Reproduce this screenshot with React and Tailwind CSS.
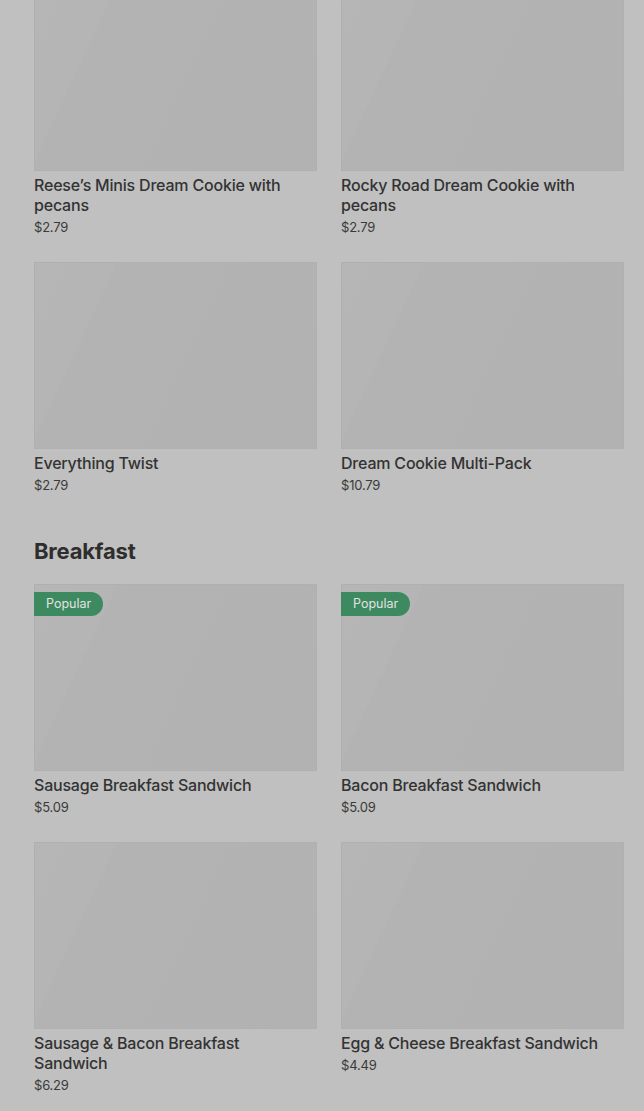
import React from "react";

const sections = [
  {
    title: null,
    items: [
      { name: "Reese’s Minis Dream Cookie with pecans", price: "$2.79" },
      { name: "Rocky Road Dream Cookie with pecans", price: "$2.79" },
      { name: "Everything Twist", price: "$2.79" },
      { name: "Dream Cookie Multi-Pack", price: "$10.79" },
    ],
  },
  {
    title: "Breakfast",
    items: [
      { name: "Sausage Breakfast Sandwich", price: "$5.09", popular: true },
      { name: "Bacon Breakfast Sandwich", price: "$5.09", popular: true },
      { name: "Sausage & Bacon Breakfast Sandwich", price: "$6.29" },
      { name: "Egg & Cheese Breakfast Sandwich", price: "$4.49" },
    ],
  },
];

const ProductCard = ({ item }) => (
  <div className="flex flex-col">
    <div className="relative h-[187px] w-full border border-[#b0b0b0] bg-[linear-gradient(115deg,#b6b6b6_0%,#b5b5b5_22%,#b3b3b3_22.5%,#b2b2b2_100%)]">
      {item.popular && (
        <span className="absolute -left-px top-[7px] flex h-6 items-center rounded-r-full bg-[#3d8a60] pl-3 pr-3 text-[12.5px] text-[#e2e2e2]">
          Popular
        </span>
      )}
    </div>
    <p className="mt-1 pr-2 text-[16px] font-medium leading-5 tracking-[-0.2px] text-[#333333]">
      {item.name}
    </p>
    <p className="mt-0.5 text-[13px] leading-5 tracking-[-0.2px] text-[#3a3a3a]">
      {item.price}
    </p>
  </div>
);

export default function App() {
  return (
    <div
      className="min-h-[1111px] overflow-hidden bg-[#c0c0c0] pl-[34px] pr-5"
      style={{ fontFamily: "Inter, Roboto, sans-serif" }}
    >
      <div className="-mt-4 flex flex-col gap-[42px]">
        {sections.map((section, i) => (
          <section key={i} className="flex flex-col">
            {section.title && (
              <h2 className="mb-[19px] text-[22px] font-bold leading-7 tracking-[-0.2px] text-[#2e2e2e]">
                {section.title}
              </h2>
            )}
            <div className="grid grid-cols-2 gap-x-6 gap-y-[25px]">
              {section.items.map((item) => (
                <ProductCard key={item.name} item={item} />
              ))}
            </div>
          </section>
        ))}
      </div>
    </div>
  );
}
